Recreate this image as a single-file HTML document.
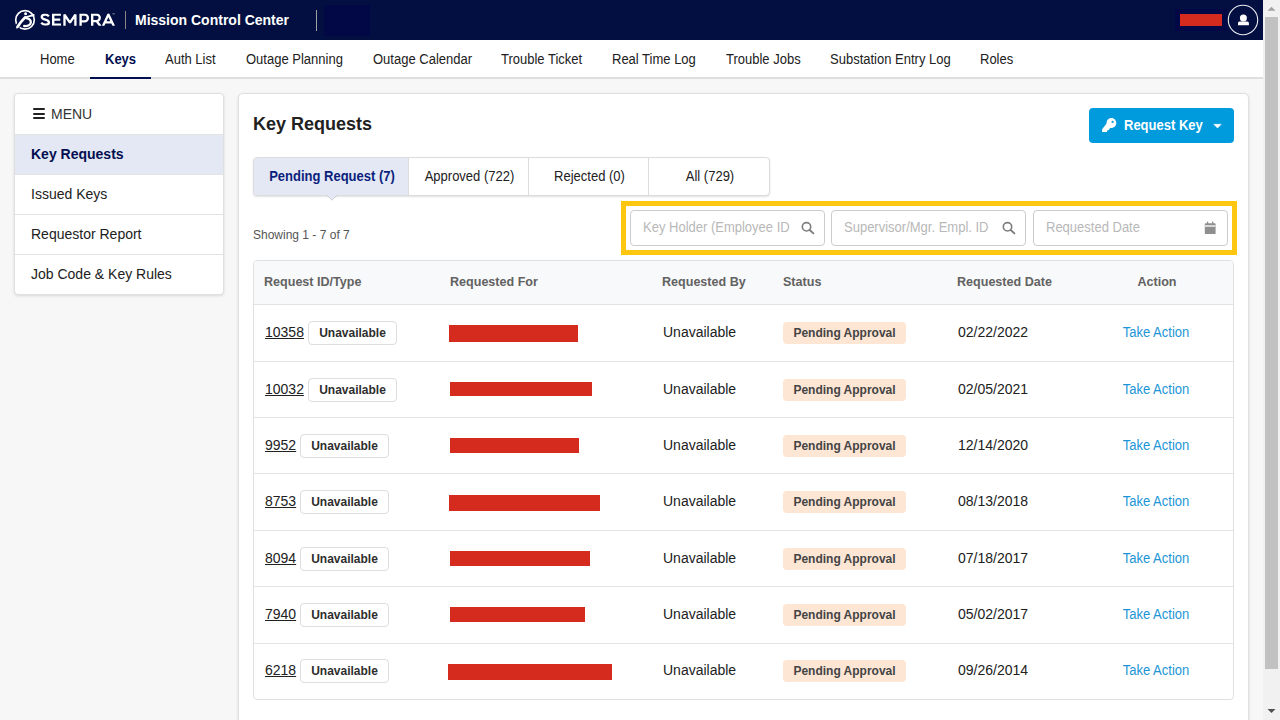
<!DOCTYPE html>
<html>
<head>
<meta charset="utf-8">
<title>Mission Control Center</title>
<style>
*{box-sizing:border-box;margin:0;padding:0}
html,body{width:1280px;height:720px;overflow:hidden;background:#f7f7f7;font-family:"Liberation Sans",sans-serif;font-size:14px;color:#212121}
#hdr{position:absolute;left:0;top:0;width:1263px;height:40px;background:#020f40}
#hdr .title{position:absolute;left:135px;top:9.6px;font-size:14px;font-weight:bold;color:#fff;white-space:nowrap;line-height:20px}
#hdr .sep1{position:absolute;left:125px;top:11px;width:1px;height:18px;background:#8b8680}
#hdr .sep2{position:absolute;left:316px;top:10px;width:1px;height:21px;background:#a0a0a0}
#hdr .blk1{position:absolute;left:324px;top:5px;width:46px;height:31px;background:#020845}
#hdr .blk2{position:absolute;left:1175px;top:9px;width:52px;height:22px;background:#020845}
#hdr .red{position:absolute;left:1180px;top:14px;width:42px;height:12px;background:#d52b1e}
#hdr svg{position:absolute;left:0;top:0}
#nav{position:absolute;left:0;top:40px;width:1263px;height:39px;background:#fff;border-bottom:2px solid #dfdfdf}
#nav .t{top:9px;font-size:14px;color:#212121}
#nav .t.act{font-weight:bold;color:#010e4f}
#nav .ul{position:absolute;left:90px;top:37px;width:61px;height:2px;background:#010e4f}
#side{position:absolute;left:14px;top:93px;width:210px;height:202px;background:#fff;border:1px solid #e0e0e0;border-radius:4px;overflow:hidden;box-shadow:0 1px 3px rgba(0,0,0,.12)}
#side div{position:absolute;left:0;width:208px;height:40px;line-height:38px;padding-left:16px;font-size:14px;color:#212121;border-top:1px solid #e3e3e3}
#side div.hd{border-top:none;top:0;line-height:40px;padding-left:36px;color:#333}
#side .hb{position:absolute;left:18px;width:12px;height:2px;border-radius:1px;background:#222}
#side div.act{background:#e4e8f5;font-weight:bold;color:#010e4f}
#main{position:absolute;left:238px;top:93px;width:1011px;height:640px;background:#fff;border:1px solid #e0e0e0;border-radius:5px;box-shadow:0 1px 3px rgba(0,0,0,.12)}
#sb{position:absolute;left:1263px;top:0;width:17px;height:720px;background:#f1f1f1}
#sb .thumb{position:absolute;left:2px;top:17px;width:13px;height:652px;background:#c1c1c1}

.t{position:absolute;white-space:nowrap;transform-origin:0 50%;line-height:20px;height:20px}
.n{transform:scaleX(.9286)}
.tc{transform-origin:50% 50%;text-align:center}
#main .h1{left:14px;top:20px;font-size:18px;font-weight:bold;color:#212121}
#btn{position:absolute;left:850px;top:14px;width:145px;height:35px;background:#009bdd;border-radius:4px}
#btn .t{left:35px;top:7px;color:#fff;font-weight:bold;font-size:14px}
#tabs{position:absolute;left:14px;top:63px;width:517px;height:39px;border:1px solid #dcdcdc;border-radius:4px;box-shadow:0 1px 2px rgba(0,0,0,.12);background:#fff}
#tabs .tab{position:absolute;top:0;height:37px;border-left:1px solid #dcdcdc}
#tabs .tab.act{background:#e4e8f5;border-left:none;border-radius:3px 0 0 3px}
#tabs .t{top:8px;left:1px;width:100%;font-size:14px;color:#212121}
#tabs .act .t{font-weight:bold;color:#0b1f7c}
#show{left:14px;top:131px;font-size:12px;color:#555}
#hl{position:absolute;left:382px;top:107px;width:616px;height:54px;border:5px solid #fdc611}
.inp{position:absolute;top:116px;width:195px;height:36px;border:1px solid #ccc;border-radius:4px;background:#fff}
.inp .t{left:12.3px;top:6.1px;font-size:14px;color:#b8b8b8}
#tbl{position:absolute;left:14px;top:166px;width:981px;height:440px;border:1px solid #e0e0e0;border-radius:4px;background:#fff;overflow:hidden}
#tbl .th{position:absolute;left:0;top:0;width:100%;height:44px;background:#f8f9fa;border-bottom:1px solid #e3e3e3}
#tbl .th .t{top:10.7px;font-weight:bold;color:#626262;font-size:13.3px;transform:scaleX(.944)}
.row{position:absolute;left:0;width:100%;height:57px;border-bottom:1px solid #e3e3e3}
.row .t{top:17px;font-size:14px;color:#212121}
.row .id{left:11px;text-decoration:underline}
.row .bdg{position:absolute;top:16px;height:24px;width:89px;border:1px solid #ddd;border-radius:4px}
.row .bdg .t{left:0;top:1px;width:100%;font-size:12px;font-weight:bold;color:#2e2e2e}
.rf{position:absolute;background:#d52b1e}
.row .rb{left:409px}
.row .st{position:absolute;left:529px;top:17px;width:123px;height:22px;background:#fee6d5;border-radius:4px}
.row .st .t{left:0;top:0.5px;width:100%;font-size:12px;font-weight:bold;color:#444}
.row .dt{left:704px}
.row .ac{left:851.5px;width:100px;color:#1b95d6}
</style>
</head>
<body>
<div id="hdr">
  <svg width="1263" height="40" viewBox="0 0 1263 40">
    <g fill="none" stroke="#fff" stroke-linecap="round" stroke-linejoin="round">
      <circle cx="25" cy="19.9" r="9.3" stroke-width="1.7"/>
      <path d="M15.6 29.6 C17.6 26 19.4 23.6 21.6 21" stroke="#020f40" stroke-width="4.6" stroke-linecap="butt"/>
      <path d="M17.4 27 C19.6 23.6 21.8 20.6 25 17.5" stroke-width="2.6"/>
      <path d="M25 17.5 C27.6 16.5 30.6 15.9 33.7 15"  stroke-width="2"/>
      <path d="M26.2 18.2 C29.4 18.7 31 20.6 30.8 22.7 C30.6 24.8 27.8 26.2 24.2 26" stroke-width="2.3"/>
    </g>
    <clipPath id="cp"><rect x="38" y="13.5" width="80" height="12.2"/></clipPath>
    <g fill="none" stroke="#fff" stroke-width="2.35" stroke-linejoin="miter" stroke-miterlimit="6" clip-path="url(#cp)">
      <path d="M48.9 16.4 C47.9 15.1 46.7 14.55 45.1 14.55 C43 14.55 41.75 15.6 41.75 17 C41.75 18.6 43 19.15 45.4 19.7 C48 20.3 48.95 21.1 48.95 22.6 C48.95 24 47.6 24.65 45.6 24.65 C43.8 24.65 42.4 24 41.2 22.7"/>
      <path d="M60.9 14.6 H53.2 V24.6 H61 M53.2 19.55 H60.2"/>
      <path d="M64.5 26 V14.6 L69.95 22.6 L75.4 14.6 V26" stroke-linejoin="bevel"/>
      <path d="M80.6 26 V14.6 H84.5 A3.4 3.4 0 0 1 84.5 21.4 H80.6"/>
      <path d="M92.2 26 V14.6 H96.5 A3.25 3.25 0 0 1 96.5 21.1 H92.2 M96.6 21.1 L100.5 26.3"/>
      <path d="M102.9 26.2 L108.4 14.4 L113.9 26.2 M105.3 22.3 H111.5" stroke-linejoin="round"/>
    </g>
    <rect x="112.4" y="13.2" width="2.5" height="1.2" fill="#fff" opacity=".4"/>
    <path d="M15.9 28.9 L18.6 24.2 L20.4 25.6 Z" fill="#fff"/>
    <circle cx="25.6" cy="13.8" r="1.5" fill="#fff"/>
    <circle cx="1243" cy="20" r="14.7" fill="none" stroke="#fff" stroke-width="1.1" opacity=".92"/>
    <circle cx="1243.4" cy="18" r="3.5" fill="#fff"/>
    <path d="M1238 25.3 V23 Q1238 21.5 1239.5 21.5 H1247.4 Q1248.9 21.5 1248.9 23 V25.3 Z" fill="#fff"/>
  </svg>
  <div class="sep1"></div>
  <div class="title">Mission Control Center</div>
  <div class="sep2"></div>
  <div class="blk1"></div>
  <div class="blk2"></div>
  <div class="red"></div>
</div>
<div id="nav">
  <span class="t n" style="left:40px">Home</span>
  <span class="t n act" style="left:105px">Keys</span>
  <span class="t n" style="left:165px">Auth List</span>
  <span class="t n" style="left:246px">Outage Planning</span>
  <span class="t n" style="left:373px">Outage Calendar</span>
  <span class="t n" style="left:501px">Trouble Ticket</span>
  <span class="t n" style="left:612px">Real Time Log</span>
  <span class="t n" style="left:726px">Trouble Jobs</span>
  <span class="t n" style="left:830px">Substation Entry Log</span>
  <span class="t n" style="left:980px">Roles</span>
  <div class="ul"></div>
</div>
<div id="side">
  <div class="hd">MENU</div>
  <i class="hb" style="top:14px"></i><i class="hb" style="top:18.5px"></i><i class="hb" style="top:23px"></i>
  <div class="act" style="top:40px">Key Requests</div>
  <div style="top:80px">Issued Keys</div>
  <div style="top:120px">Requestor Report</div>
  <div style="top:160px">Job Code &amp; Key Rules</div>
</div>
<div id="main">
  <span class="t h1">Key Requests</span>
  <div id="btn"><span class="t n">Request Key</span></div>
  <div id="tabs">
    <div class="tab act" style="left:0;width:154px"><span class="t n tc">Pending Request (7)</span></div>
    <div class="tab" style="left:154px;width:120px"><span class="t n tc">Approved (722)</span></div>
    <div class="tab" style="left:274px;width:120px"><span class="t n tc">Rejected (0)</span></div>
    <div class="tab" style="left:394px;width:121px"><span class="t n tc">All (729)</span></div>
  </div>
  <span class="t" id="show">Showing 1 - 7 of 7</span>
  <div id="hl"></div>
  <div class="inp" style="left:391px"><span class="t n">Key Holder (Employee ID</span></div>
  <div class="inp" style="left:592px"><span class="t n">Supervisor/Mgr. Empl. ID</span></div>
  <div class="inp" style="left:794px"><span class="t n">Requested Date</span></div>
  <div id="tbl">
    <div class="th">
      <span class="t n" style="left:10px">Request ID/Type</span>
      <span class="t n" style="left:196px">Requested For</span>
      <span class="t n" style="left:408px">Requested By</span>
      <span class="t n" style="left:529px">Status</span>
      <span class="t n" style="left:703px">Requested Date</span>
      <span class="t n tc" style="left:853px;width:100px">Action</span>
    </div>
  <div class="row" style="top:44px;height:57px">
    <span class="t id">10358</span>
    <div class="bdg" style="left:54px"><span class="t tc">Unavailable</span></div>
    <span class="t rb">Unavailable</span>
    <div class="st"><span class="t tc">Pending Approval</span></div>
    <span class="t dt">02/22/2022</span>
    <span class="t n tc ac">Take Action</span>
  </div>
  <div class="row" style="top:101px;height:56px">
    <span class="t id">10032</span>
    <div class="bdg" style="left:54px"><span class="t tc">Unavailable</span></div>
    <span class="t rb">Unavailable</span>
    <div class="st"><span class="t tc">Pending Approval</span></div>
    <span class="t dt">02/05/2021</span>
    <span class="t n tc ac">Take Action</span>
  </div>
  <div class="row" style="top:157px;height:56px">
    <span class="t id">9952</span>
    <div class="bdg" style="left:46px"><span class="t tc">Unavailable</span></div>
    <span class="t rb">Unavailable</span>
    <div class="st"><span class="t tc">Pending Approval</span></div>
    <span class="t dt">12/14/2020</span>
    <span class="t n tc ac">Take Action</span>
  </div>
  <div class="row" style="top:213px;height:57px">
    <span class="t id">8753</span>
    <div class="bdg" style="left:46px"><span class="t tc">Unavailable</span></div>
    <span class="t rb">Unavailable</span>
    <div class="st"><span class="t tc">Pending Approval</span></div>
    <span class="t dt">08/13/2018</span>
    <span class="t n tc ac">Take Action</span>
  </div>
  <div class="row" style="top:270px;height:56px">
    <span class="t id">8094</span>
    <div class="bdg" style="left:46px"><span class="t tc">Unavailable</span></div>
    <span class="t rb">Unavailable</span>
    <div class="st"><span class="t tc">Pending Approval</span></div>
    <span class="t dt">07/18/2017</span>
    <span class="t n tc ac">Take Action</span>
  </div>
  <div class="row" style="top:326px;height:57px">
    <span class="t id">7940</span>
    <div class="bdg" style="left:46px"><span class="t tc">Unavailable</span></div>
    <span class="t rb">Unavailable</span>
    <div class="st"><span class="t tc">Pending Approval</span></div>
    <span class="t dt">05/02/2017</span>
    <span class="t n tc ac">Take Action</span>
  </div>
  <div class="row" style="top:382px;height:57px">
    <span class="t id">6218</span>
    <div class="bdg" style="left:46px"><span class="t tc">Unavailable</span></div>
    <span class="t rb">Unavailable</span>
    <div class="st"><span class="t tc">Pending Approval</span></div>
    <span class="t dt">09/26/2014</span>
    <span class="t n tc ac">Take Action</span>
  </div>
    <div class="rf" style="left:195px;top:64px;width:129px;height:17px"></div>
    <div class="rf" style="left:196px;top:121px;width:142px;height:14px"></div>
    <div class="rf" style="left:196px;top:177px;width:129px;height:15px"></div>
    <div class="rf" style="left:195px;top:234px;width:151px;height:16px"></div>
    <div class="rf" style="left:196px;top:290px;width:140px;height:15px"></div>
    <div class="rf" style="left:196px;top:346px;width:135px;height:15px"></div>
    <div class="rf" style="left:194px;top:403px;width:164px;height:16px"></div>
  </div>
</div>
<div id="sb"><div class="thumb"></div></div>
<svg id="ico" width="1280" height="720" viewBox="0 0 1280 720" style="position:absolute;left:0;top:0;pointer-events:none">
  <!-- key icon -->
  <g fill="#fff">
    <circle cx="1111.4" cy="123" r="4.9"/>
    <path d="M1106.6 123.6 L1102.1 129.3 V131.9 H1106.9 L1107.3 130.4 L1109 129.8 L1109.8 128.3 L1113 127.4 Z"/>
  </g>
  <circle cx="1112.6" cy="121.9" r="1.1" fill="#009bdd"/>
  <!-- caret -->
  <path d="M1213.8 124.3 H1221.2 L1217.5 128 Z" fill="#fff" stroke="#fff" stroke-width=".6" stroke-linejoin="round"/>
  <!-- magnifiers -->
  <g fill="none" stroke="#7e7e7e" stroke-linecap="round">
    <circle cx="806.5" cy="226.8" r="4.2" stroke-width="1.6"/>
    <path d="M809.7 230 L813.4 233.4" stroke-width="1.9"/>
    <circle cx="1007.5" cy="226.8" r="4.2" stroke-width="1.6"/>
    <path d="M1010.7 230 L1014.4 233.4" stroke-width="1.9"/>
  </g>
  <!-- calendar -->
  <g fill="#8f8f8f">
    <rect x="1204.8" y="223.2" width="10.8" height="10.9" rx=".9"/>
    <rect x="1206.9" y="221.6" width="1.3" height="2.5" rx=".5"/>
    <rect x="1212" y="221.6" width="1.3" height="2.5" rx=".5"/>
  </g>
  <rect x="1204.8" y="225" width="10.8" height="2" fill="#d8d8d8"/>
  <!-- tab caret -->
  <path d="M327 195 L331.9 200 L336.8 195 Z" fill="#e4e8f5"/>
  <path d="M327 195.3 L331.9 200.2 L336.8 195.3" fill="none" stroke="#c9c9c9" stroke-width=".9"/>
  <!-- scrollbar arrows -->
  <path d="M1267.5 10.8 L1271.5 6.8 L1275.5 10.8 Z" fill="#a3a3a3"/>
  <path d="M1267.5 709 L1271.5 713 L1275.5 709 Z" fill="#505050"/>
</svg>

</body>
</html>
